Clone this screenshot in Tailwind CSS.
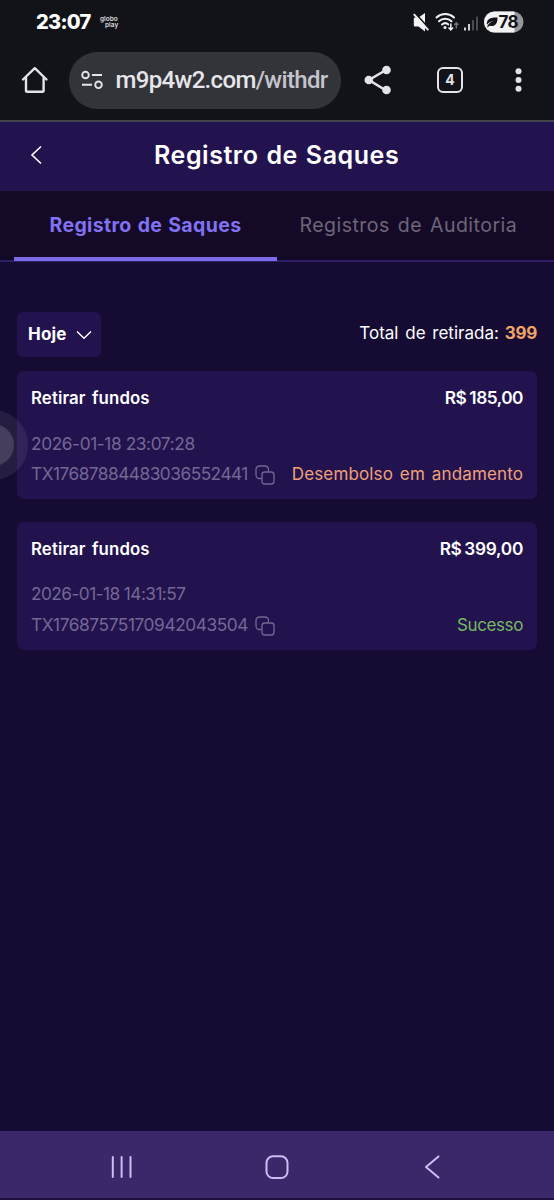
<!DOCTYPE html>
<html lang="pt-BR"><head><meta charset="utf-8"><title>Registro de Saques</title><script src="https://cdn.jsdelivr.net/npm/@tailwindcss/browser@4"></script></head>
<body class="bg-[#160c33] text-white">
<div class="relative flex h-[1200px] w-[554px] flex-col overflow-hidden font-['Inter','Liberation_Sans',sans-serif] leading-none whitespace-nowrap">
  <!-- Status bar -->
  <div class="flex h-[43px] shrink-0 items-center bg-[#121318] pl-[36px] pr-[30px]">
    <span class="w-[55px] text-[20px] font-extrabold tracking-[-0.700px]">23:07</span>
    <div class="ml-[9px] flex flex-col text-[6.500px] leading-[6px] font-semibold text-[#d8d8dc]"><span>globo</span><span class="pl-[5px]">play</span></div>
    <svg class="ml-auto" width="111" height="24" viewBox="0 0 111 24" fill="none">
      <path d="M2 7.500h3.500L12 3v18.500L5.500 16.500H2q-1.200 0-1.200-1.200V8.700q0-1.200 1.200-1.200z" fill="#f2f2f4"/><path d="M1.500 2.500 16 18.500" stroke="#121318" stroke-width="1.800"/><path d="M0.800 4.200 15.300 20.200" stroke="#f2f2f4" stroke-width="1.900"/>
      <g stroke="#f2f2f4" stroke-width="2" stroke-linecap="round"><path d="M23.500 7.500a13 13 0 0 1 17.500 0M26 11.200a9 9 0 0 1 12.500 0M29 14.500a5 5 0 0 1 6.500 0"/></g>
      <circle cx="32" cy="17.500" r="1.500" fill="#f2f2f4"/>
      <path d="M37.800 13.500v6m-2.200-2.200 2.200 2.400 2.200-2.400" stroke="#121318" stroke-width="3.600"/>
      <path d="M37.800 13.500v6.200m-2.300-2.200 2.300 2.500 2.300-2.500" stroke="#f2f2f4" stroke-width="1.500"/><path d="M43.300 18.500v-5.500m-2 2 2-2.200 2 2.200" stroke="#77787d" stroke-width="1.300"/>
      <path d="M52 17.500v3M56 14v6.500" stroke="#f2f2f4" stroke-width="1.700"/><path d="M60 10v10.500M64 6.500v14" stroke="#55565b" stroke-width="1.700"/>
      <rect x="71" y="1.500" width="39.500" height="21" rx="10.500" fill="#96979a"/><path d="M81.500 1.500h20v21h-20a10.500 10.500 0 0 1 0-21z" fill="#f2f2f4"/>
      <path d="M74 14.800c-.8-4.800 2-7.500 10.500-7.300.2 6-2.500 9.500-8 8.300l-2.200 1.700c0-3 3-5.600 7-6.700-3 .4-5.800 1.900-7.300 4z" fill="#121318"/>
      <text x="85.500" y="18.200" font-family="Inter" font-size="17" font-weight="700" letter-spacing="-.6" fill="#121318">78</text>
    </svg>
  </div>
  <!-- Browser toolbar -->
  <div class="flex h-[77px] shrink-0 items-center bg-[#121318] pr-[28px] pb-[3px] pl-[20px]">
    <svg class="shrink-0" width="30" height="30" viewBox="0 0 30 30" fill="none" stroke="#e3e3e8" stroke-width="2.400" stroke-linecap="round" stroke-linejoin="round"><path d="M3 14.500 14.800 3.200 26.500 14.500M6 12v13.500q0 1.300 1.300 1.300h15q1.300 0 1.300-1.300V12"/></svg>
    <div class="ml-[19px] flex h-[57px] w-[271.500px] shrink-0 items-center rounded-full bg-[#333439] pl-[12px]">
      <svg class="shrink-0" width="22" height="20" viewBox="0 0 22 20" fill="none" stroke="#e3e3e8" stroke-width="1.900"><circle cx="4.500" cy="5" r="3.300"/><path d="M11 5h10M1 14.800h10"/><circle cx="17.500" cy="14.800" r="3.300"/></svg>
      <span class="ml-[12.500px] font-[Roboto] text-[24px] font-medium tracking-[-0.670px] text-[#e6e6ea]">m9p4w2.com<span class="text-[#c4c4cc]">/withdr</span></span>
    </div>
    <svg class="ml-[22px] shrink-0" width="30" height="30" viewBox="0 0 30 30" fill="#e3e3e8" stroke="#e3e3e8" stroke-width="2.600"><path d="M23 5 6 15l17 10.500" fill="none"/><g stroke="none"><circle cx="23.500" cy="5" r="4.300"/><circle cx="5.800" cy="15" r="4.300"/><circle cx="23.500" cy="25" r="4.300"/></g></svg>
    <div class="ml-auto flex size-[26px] items-center justify-center rounded-[6px] border-[2.500px] border-[#e3e3e8] text-[14px] font-bold text-[#e3e3e8]">4</div>
    <svg class="ml-[48px]" width="15" height="26" viewBox="0 0 15 26" fill="#e3e3e8"><circle cx="7.500" cy="4.200" r="3"/><circle cx="7.500" cy="13" r="3"/><circle cx="7.500" cy="21.800" r="3"/></svg>
  </div>
  <div class="h-[2px] shrink-0 bg-[#43434d]"></div>
  <!-- Page header -->
  <header class="flex h-[69px] shrink-0 items-center bg-[#22134f] pb-[3px]">
    <svg class="ml-[30px]" width="12" height="20" viewBox="0 0 12 20" fill="none" stroke="#fff" stroke-width="1.600"><path d="M11 1.500 2 10l9 8.500"/></svg>
    <h1 class="ml-[112px] text-[25px] font-semibold tracking-[0.560px] [word-spacing:1px]">Registro de Saques</h1>
  </header>
  <!-- Tabs -->
  <nav class="flex h-[71px] shrink-0 border-b-2 border-[#2d1f63] bg-[#140a27] px-[14px]">
    <div class="-mb-px flex w-[263px] items-center border-b-[4px] border-[#7d6ae8] pt-[4px] pl-[35.500px] text-[#8271f2]"><span class="text-[19.500px] font-bold tracking-[0.360px] [word-spacing:1px]">Registro de Saques</span></div>
    <div class="flex items-center pl-[22.500px] text-[#6d6678]"><span class="text-[19.500px] tracking-[0.480px] [word-spacing:2px]">Registros de Auditoria</span></div>
  </nav>
  <main class="flex flex-1 flex-col px-[17px] pt-[50px]">
    <div class="flex items-center justify-between">
      <button class="flex h-[45px] w-[84px] items-center rounded-[6px] bg-[#22134f] pl-[11px]"><span class="text-[17px] font-bold tracking-[0.200px]">Hoje</span>
      <svg class="ml-[9px] shrink-0" width="16" height="10" viewBox="0 0 16 10" fill="none" stroke="#fff" stroke-width="1.400"><path d="m1 1.500 7 6.800 7-6.800"/></svg></button>
      <p class="flex pb-[3px] text-[17px]"><span class="[word-spacing:2px]">Total de retirada:</span><span class="ml-[6px] font-bold tracking-[-0.300px] text-[#f0a468]">399</span></p>
    </div>
    <section class="mt-[14px] h-[128px] rounded-[7px] bg-[#22134f] px-[14px] pt-[14px] text-[17.300px]">
      <div class="flex h-[27px] items-center justify-between font-semibold"><span class="text-[16.800px] tracking-[0.120px] [word-spacing:2px]">Retirar fundos</span><span class="flex gap-[3px] pb-px"><span class="tracking-[-0.500px]">R$</span><span class="tracking-[-0.500px]">185,00</span></span></div>
      <div class="mt-[17px] flex h-[30px] items-center text-[#736794]"><span class="tracking-[-0.400px]">2026-01-18 23:07:28</span></div>
      <div class="flex h-[30px] items-center text-[#736794]"><span class="w-[217px] tracking-[-0.510px]">TX17687884483036552441</span>
        <svg class="mt-[2px] ml-[7px] shrink-0" width="20" height="20" viewBox="0 0 20 20" fill="none" stroke="currentColor" stroke-width="1.300"><path d="M6.500 13.500H4.500a3.500 3.500 0 0 1-3.500-3.500V4.500A3.500 3.500 0 0 1 4.500 1H10a3.500 3.500 0 0 1 3.500 3.500v2"/><rect x="7" y="7" width="12" height="12" rx="2.800"/></svg>
        <span class="ml-auto text-[17px] tracking-[0.130px] text-[#f0a07a] [word-spacing:2px]">Desembolso em andamento</span></div>
    </section>
    <section class="mt-[23px] h-[128px] rounded-[7px] bg-[#22134f] px-[14px] pt-[14px] text-[17.300px]">
      <div class="flex h-[27px] items-center justify-between font-semibold"><span class="text-[16.800px] tracking-[0.120px] [word-spacing:2px]">Retirar fundos</span><span class="flex gap-[3px] pb-px"><span class="tracking-[-0.500px]">R$</span><span class="tracking-[-0.300px]">399,00</span></span></div>
      <div class="mt-[16px] flex h-[30px] items-center text-[#736794]"><span class="tracking-[-0.570px]">2026-01-18 14:31:57</span></div>
      <div class="flex h-[30px] items-center pt-px text-[#736794]"><span class="w-[217px] tracking-[-0.420px]">TX17687575170942043504</span>
        <svg class="mt-[2px] ml-[7px] shrink-0" width="20" height="20" viewBox="0 0 20 20" fill="none" stroke="currentColor" stroke-width="1.300"><path d="M6.500 13.500H4.500a3.500 3.500 0 0 1-3.500-3.500V4.500A3.500 3.500 0 0 1 4.500 1H10a3.500 3.500 0 0 1 3.500 3.500v2"/><rect x="7" y="7" width="12" height="12" rx="2.800"/></svg>
        <span class="ml-auto pt-px text-[17px] tracking-[-0.400px] text-[#79b862]">Sucesso</span></div>
    </section>
  </main>
  <!-- System navigation -->
  <footer class="flex h-[69px] shrink-0 items-center justify-between border-b-2 border-[#1d1140] bg-[#3a286b] pt-[5px] pr-[114px] pl-[110px] text-[#cdbdf2]">
    <svg width="23" height="24" viewBox="0 0 23 24" stroke="currentColor" stroke-width="2" stroke-linecap="round"><path d="M2.800 2v20M11.600 2v20M20.500 2v20"/></svg>
    <svg class="mr-[4px]" width="24" height="24" viewBox="0 0 24 24" fill="none" stroke="currentColor" stroke-width="2"><rect x="1.500" y="1.300" width="21" height="21.700" rx="6.500"/></svg>
    <svg width="16" height="24" viewBox="0 0 16 24" fill="none" stroke="currentColor" stroke-width="2" stroke-linecap="round" stroke-linejoin="round"><path d="M14.500 1.500 2 12l12.500 10.500"/></svg>
  </footer>
  <!-- Floating assistive handle -->
  <div class="absolute top-[410px] -left-[42px] flex size-[70px] items-center justify-center rounded-full bg-white/7"><div class="size-[42px] rounded-full bg-white/15"></div></div>
</div>
</body></html>
